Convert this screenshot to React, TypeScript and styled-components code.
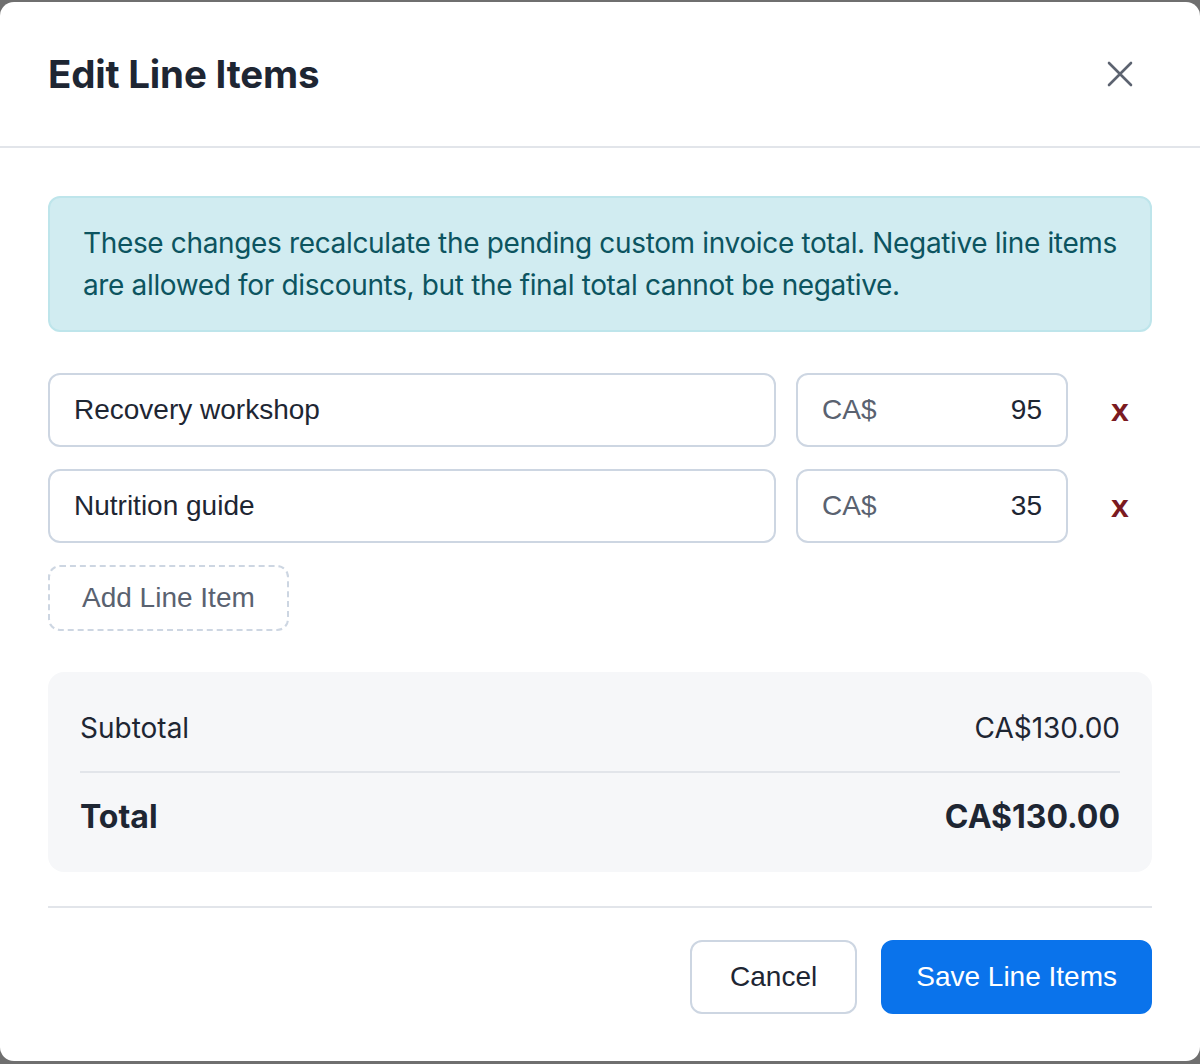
import React from "react";
import styled, { createGlobalStyle } from "styled-components";

const GlobalStyle = createGlobalStyle`
  * { box-sizing: border-box; }
  html, body {
    margin: 0;
    padding: 0;
    background: #6f6f6f;
  }
  body {
    font-family: Inter, "Noto Sans", sans-serif;
  }
`;

type Item = { name: string; amount: string };

const items: Item[] = [
  { name: "Recovery workshop", amount: "95" },
  { name: "Nutrition guide", amount: "35" },
];

export default function App() {
  return (
    <>
      <GlobalStyle />
      <Modal>
        <Header>
          <Title>Edit Line Items</Title>
          <CloseButton aria-label="Close">
            <svg width="26" height="26" viewBox="0 0 26 26" fill="none">
              <path
                d="M2 2 L24 24 M24 2 L2 24"
                stroke="#5c6370"
                strokeWidth="2.6"
                strokeLinecap="round"
              />
            </svg>
          </CloseButton>
        </Header>

        <Body>
          <InfoBox>
            These changes recalculate the pending custom invoice total. Negative line items
            are allowed for discounts, but the final total cannot be negative.
          </InfoBox>

          <Rows>
            {items.map((item) => (
              <Row key={item.name}>
                <NameInput defaultValue={item.name} />
                <PriceField>
                  <Prefix>CA$</Prefix>
                  <AmountInput defaultValue={item.amount} />
                </PriceField>
                <RemoveButton>x</RemoveButton>
              </Row>
            ))}
          </Rows>

          <AddButton>Add Line Item</AddButton>

          <Summary>
            <SummaryRow>
              <span>Subtotal</span>
              <span>CA$130.00</span>
            </SummaryRow>
            <SummaryRow $total>
              <span>Total</span>
              <span>CA$130.00</span>
            </SummaryRow>
          </Summary>

          <Footer>
            <Button>Cancel</Button>
            <Button $primary>Save Line Items</Button>
          </Footer>
        </Body>
      </Modal>
    </>
  );
}

const Modal = styled.div`
  margin-top: 2px;
  width: 1200px;
  height: 1059px;
  background: #ffffff;
  border-radius: 14px;
  overflow: hidden;
`;

const Header = styled.div`
  height: 144px;
  padding: 0 48px;
  display: flex;
  align-items: center;
  justify-content: space-between;
  border-bottom: 2px solid #e2e5ea;
  box-sizing: content-box;
`;

const Title = styled.h1`
  margin: 0;
  font-family: Inter, sans-serif;
  font-size: 38.5px;
  font-weight: 700;
  color: #1e2633;
  letter-spacing: -0.2px;
`;

const CloseButton = styled.button`
  width: 48px;
  height: 48px;
  margin-right: 8px;
  display: flex;
  align-items: center;
  justify-content: center;
  border: none;
  background: transparent;
  padding: 0;
  cursor: pointer;
`;

const Body = styled.div`
  padding: 48px 48px 0;
  display: flex;
  flex-direction: column;
`;

const InfoBox = styled.div`
  background: #d1ecf1;
  border: 2px solid #bee5eb;
  border-radius: 12px;
  padding: 24px 30px 24px 33px;
  color: #0c5460;
  font-family: Inter, sans-serif;
  font-size: 28px;
  line-height: 42px;
  letter-spacing: -0.35px;
`;

const Rows = styled.div`
  margin-top: 41px;
  display: flex;
  flex-direction: column;
  gap: 22px;
`;

const fieldBox = `
  height: 74px;
  border: 2px solid #cdd6e2;
  border-radius: 12px;
  background: #ffffff;
  font-family: "Liberation Sans", Arial, sans-serif;
  font-size: 28px;
`;

const Row = styled.div`
  display: flex;
  align-items: center;
  gap: 20px;
`;

const NameInput = styled.input`
  ${fieldBox}
  flex: 1;
  min-width: 0;
  padding: 0 24px;
  color: #1e2633;
  outline: none;
`;

const PriceField = styled.div`
  ${fieldBox}
  width: 272px;
  display: flex;
  align-items: center;
  padding: 0 24px;
`;

const Prefix = styled.span`
  color: #5a6270;
`;

const AmountInput = styled.input`
  flex: 1;
  min-width: 0;
  border: none;
  outline: none;
  background: transparent;
  text-align: right;
  font: inherit;
  color: #1e2633;
  padding: 0;
`;

const RemoveButton = styled.button`
  width: 64px;
  height: 48px;
  border: none;
  background: transparent;
  color: #7b1a21;
  font-family: "Liberation Sans", Arial, sans-serif;
  font-size: 32px;
  font-weight: 700;
  padding: 0;
  cursor: pointer;
`;

const AddButton = styled.button`
  align-self: flex-start;
  margin-top: 22px;
  height: 66px;
  padding: 0 32px;
  border: 2px dashed #cdd6e2;
  border-radius: 12px;
  background: #ffffff;
  color: #5a6270;
  font-family: "Liberation Sans", Arial, sans-serif;
  font-size: 28px;
  cursor: pointer;
`;

const Summary = styled.div`
  margin-top: 41px;
  background: #f6f7f9;
  border-radius: 16px;
  padding: 32px;
`;

const SummaryRow = styled.div<{ $total?: boolean }>`
  display: flex;
  justify-content: space-between;
  align-items: center;
  height: 48px;
  box-sizing: content-box;
  font-family: Inter, sans-serif;
  color: #1e2633;
  font-size: ${(p) => (p.$total ? "32px" : "28px")};
  font-weight: ${(p) => (p.$total ? 700 : 400)};
  ${(p) =>
    p.$total
      ? `margin-top: 19px;`
      : `padding-bottom: 19px; border-bottom: 2px solid #e2e5ea;`}
`;

const Footer = styled.div`
  margin-top: 34px;
  padding-top: 32px;
  border-top: 2px solid #e2e5ea;
  display: flex;
  justify-content: flex-end;
  gap: 24px;
`;

const Button = styled.button<{ $primary?: boolean }>`
  height: 74px;
  padding: 0 ${(p) => (p.$primary ? "33px" : "38px")};
  border-radius: 12px;
  border: 2px solid ${(p) => (p.$primary ? "#0a73eb" : "#cdd6e2")};
  background: ${(p) => (p.$primary ? "#0a73eb" : "#ffffff")};
  color: ${(p) => (p.$primary ? "#ffffff" : "#1e2633")};
  font-family: "Liberation Sans", Arial, sans-serif;
  font-size: 28px;
  cursor: pointer;
`;
